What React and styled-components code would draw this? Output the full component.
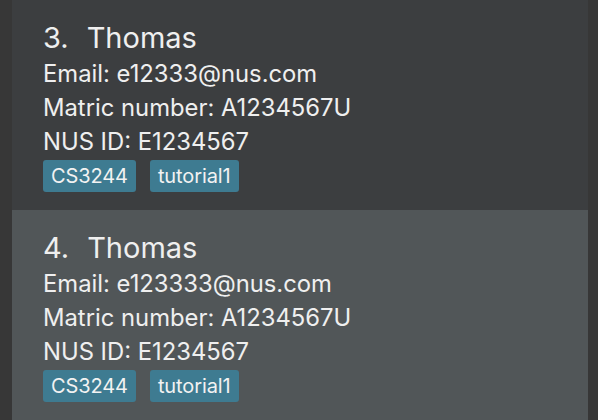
import React from "react";
import styled, { createGlobalStyle } from "styled-components";

const Global = createGlobalStyle`
  html, body { margin: 0; padding: 0; background: #373737; }
  body { font-family: "Inter", "Open Sans", sans-serif; }
`;

const Page = styled.div`
  width: 598px;
  height: 420px;
  overflow: hidden;
  background: #373737;
  padding: 0 10px 0 12px;
  box-sizing: border-box;
`;

const List = styled.div`
  display: flex;
  flex-direction: column;
`;

const Card = styled.div`
  height: 210px;
  box-sizing: border-box;
  background: ${(p) => (p.$selected ? "#515658" : "#3c3e40")};
  padding: 20px 20px 0 31px;
  display: flex;
  flex-direction: column;
  color: #efefef;
`;

const Title = styled.div`
  display: flex;
  gap: 18px;
  font-size: 29px;
  line-height: 36px;
  margin-bottom: 1px;
`;

const Field = styled.div`
  font-size: 23.8px;
  line-height: 34px;
  white-space: nowrap;
`;

const Tags = styled.div`
  display: flex;
  gap: 14px;
  margin-top: 1px;
`;

const Tag = styled.span`
  background: #3e7b91;
  color: #f2f2f2;
  font-size: 20px;
  line-height: 32px;
  height: 32px;
  padding: 0 8px;
  border-radius: 3px;
  letter-spacing: -0.1px;
`;

const people = [
  { idx: 3, name: "Thomas", email: "e12333@nus.com" },
  { idx: 4, name: "Thomas", email: "e123333@nus.com", selected: true },
];

export default function App() {
  return (
    <>
      <Global />
      <Page>
        <List>
          {people.map((p) => (
            <Card key={p.idx} $selected={p.selected}>
              <Title>
                <span>{p.idx}.</span>
                <span>{p.name}</span>
              </Title>
              <Field>Email: {p.email}</Field>
              <Field>Matric number: A1234567U</Field>
              <Field>NUS ID: E1234567</Field>
              <Tags>
                <Tag>CS3244</Tag>
                <Tag>tutorial1</Tag>
              </Tags>
            </Card>
          ))}
        </List>
      </Page>
    </>
  );
}
